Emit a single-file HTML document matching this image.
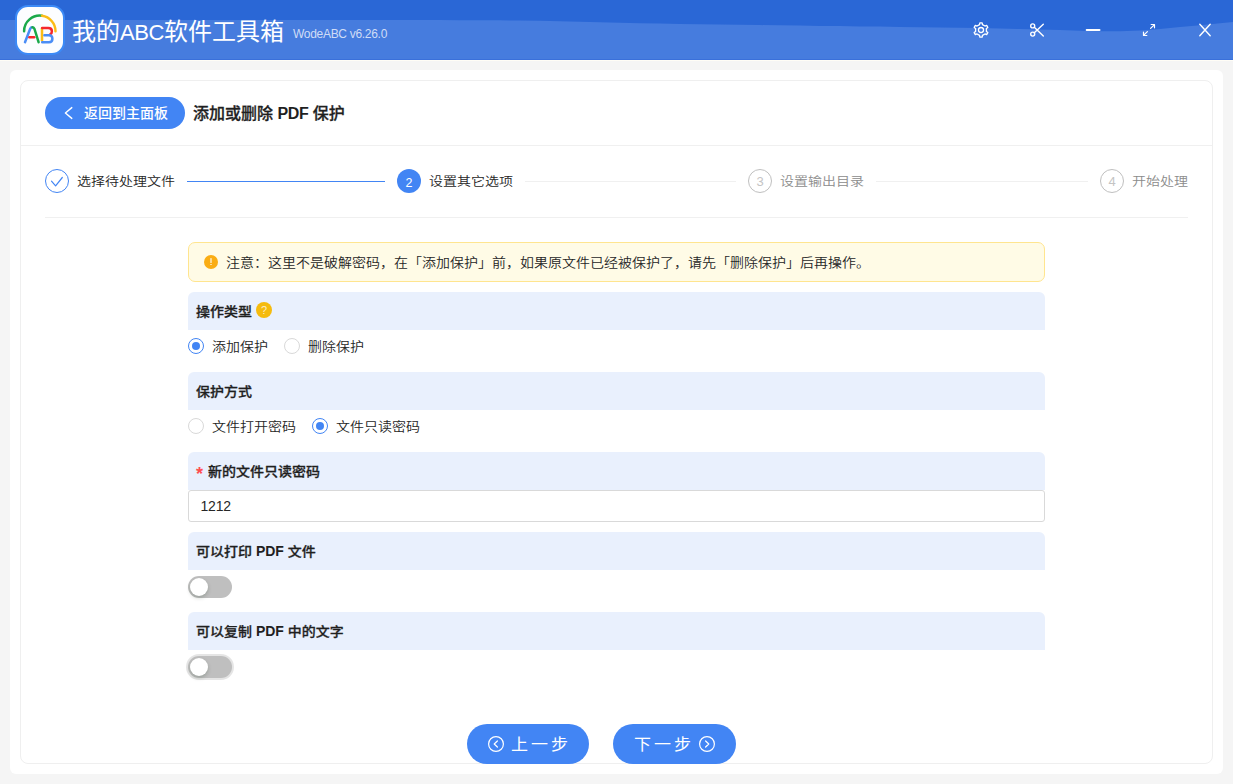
<!DOCTYPE html>
<html lang="zh-CN">
<head>
<meta charset="utf-8">
<title>我的ABC软件工具箱</title>
<style>
*{box-sizing:border-box;margin:0;padding:0}
html,body{width:1233px;height:784px;overflow:hidden;background:#f5f5f5}
body{position:relative;font-family:"Liberation Sans","Noto Sans CJK SC",sans-serif;font-size:14px;color:#262626;line-height:1}
.abs{position:absolute}
#hdr{position:absolute;left:0;top:0;width:1233px;height:61px;background:#467cde;overflow:hidden;border-bottom:1px solid #fffdf6;box-shadow:inset 0 -1px 0 #3a70da}
#hdr svg.wave{position:absolute;left:0;top:0}
#logo{position:absolute;left:15.4px;top:4.8px;width:49.4px;height:49.8px;border:2px solid #3c8af6;border-radius:13px;background:#fcfdff}
#title{position:absolute;left:72px;top:18px;font-size:24px;line-height:28px;color:#fff;white-space:nowrap;font-weight:400}
#title .lat{font-size:22px;letter-spacing:-.4px}
#ver{position:absolute;left:293px;top:27px;font-size:12px;line-height:14px;color:#cfdcf6;white-space:nowrap;letter-spacing:-.3px}
#outer{position:absolute;left:10px;top:70px;width:1213px;height:704px;background:#fff;border-radius:6px}
#card{position:absolute;left:20px;top:80px;width:1193px;height:684px;background:#fff;border:1px solid #efefef;border-radius:8px}
.hline{position:absolute;height:1px;background:#f0f0f0}
#back{position:absolute;left:45px;top:97px;width:140px;height:32px;border-radius:16px;background:#4285f4;color:#fff}
#back span{position:absolute;left:39px;top:8px;font-size:14px;line-height:16px;white-space:nowrap;font-weight:500}
#ptitle{position:absolute;left:193px;top:104px;font-size:16px;line-height:20px;font-weight:500;-webkit-text-stroke:.3px #1f1f1f;color:#1f1f1f;white-space:nowrap}
.stepc{position:absolute;top:169px;width:24px;height:24px;border-radius:12px;font-size:13px;line-height:24.5px;text-align:center;overflow:hidden}
.stept{position:absolute;top:173px;font-size:14px;font-weight:350;line-height:16px;white-space:nowrap;transform:translateY(-.2px) scaleY(.88);transform-origin:0 14.5px}
.lbl{position:absolute;left:188px;width:857px;height:38px;background:#e9f0fd;border-radius:6px 6px 0 0}
.lbl span{position:absolute;left:8px;top:11px;font-weight:500;-webkit-text-stroke:.3px #1f1f1f;font-size:14px;line-height:16px;white-space:nowrap;color:#1f1f1f;transform:translateY(-.2px) scaleY(.9);transform-origin:0 14.5px}
.lbl b{font-weight:700;-webkit-text-stroke:0;display:inline-block;transform:scaleY(1.13);transform-origin:0 12.5px}
.radio{position:absolute;width:16px;height:16px;border-radius:8px;border:1px solid #d9d9d9;background:#fff}
.radio.on{border-color:#4285f4}
.radio.on::after{content:"";position:absolute;left:3px;top:3px;width:8px;height:8px;border-radius:4px;background:#4285f4}
.rtxt{position:absolute;font-size:14px;font-weight:350;line-height:16px;white-space:nowrap;transform:translateY(.2px) scaleY(.9);transform-origin:0 14.5px}
.sw{position:absolute;left:188px;width:44px;height:22px;border-radius:11px;background:#bfbfbf}
.sw::after{content:"";position:absolute;left:2px;top:2px;width:18px;height:18px;border-radius:9px;background:#fff;box-shadow:0 2px 4px rgba(0,35,11,.2)}
.btn{position:absolute;top:724px;height:40px;border-radius:20px;background:#4285f4;color:#fff}
.btn span{position:absolute;top:12px;font-size:17px;line-height:18px;letter-spacing:3px;white-space:nowrap;transform:scaleY(.92);transform-origin:0 50%}
.lt{font-weight:700;-webkit-text-stroke:0}
</style>
</head>
<body>
<div id="hdr">
<svg class="wave" width="1233" height="60" viewBox="0 0 1233 60"><path d="M0,0 L0,20.0 L20,20.0 L40,20.0 L60,20.0 L80,20.0 L100,20.0 L120,20.0 L140,20.0 L160,20.0 L180,20.0 L200,20.0 L220,20.0 L240,20.0 L260,20.0 L280,20.0 L300,20.0 L320,20.0 L340,20.0 L360,20.0 L380,20.0 L400,20.1 L420,20.1 L440,20.1 L460,20.2 L480,20.2 L500,20.3 L520,20.5 L540,20.8 L560,21.2 L580,21.7 L600,22.2 L620,22.7 L640,23.2 L660,23.6 L680,24.0 L700,24.3 L720,24.6 L740,24.8 L760,25.1 L780,25.3 L800,25.6 L820,25.9 L840,26.1 L860,26.4 L880,26.6 L900,26.9 L920,27.2 L940,27.5 L960,27.8 L980,28.1 L1000,28.5 L1020,29.0 L1040,29.5 L1060,30.0 L1080,30.7 L1100,31.3 L1120,31.3 L1140,30.6 L1160,28.9 L1180,27.1 L1200,25.2 L1220,23.3 L1233,22.0 L1233,0 Z" fill="#2a67d6"/></svg>
<div id="logo"><svg width="45.4" height="45.8" viewBox="17.4 6.8 45.4 45.8" style="position:absolute;left:0;top:0" fill="none" stroke-linecap="round" stroke-linejoin="round" stroke-width="2.5">
<path d="M24.5,31 A15.7,15.6 0 0 1 42.4,15.56" stroke="#1aa94a"/>
<path d="M42.4,15.56 A15.7,15.6 0 0 1 55.9,31" stroke="#fbbc17"/>
<path d="M25.4,42 L30.6,28.6 Q31.3,27 32.8,27.1" stroke="#4a8df6"/>
<path d="M32.8,27.1 Q34.2,27 34.9,28.8 L39,42" stroke="#1aa94a"/>
<path d="M29.8,37 L34.6,37" stroke="#f5272d"/>
<path d="M42.4,28 L42.4,40.4" stroke="#fbbc17"/>
<path d="M42.6,27.8 L48.6,27.8 Q52.3,27.8 52.3,31 Q52.3,33.2 50.8,33.9" stroke="#f5272d"/>
<path d="M44.8,35 L49.4,35 Q52.8,35 52.8,38.5 Q52.8,42 49.4,42 L42.6,42" stroke="#4a8df6"/>
</svg></div>
<svg class="wave" width="1233" height="60" viewBox="0 0 1233 60" fill="none" stroke="#fff" stroke-width="1.3" stroke-linejoin="round" stroke-linecap="round">
<g transform="translate(981,30)"><path d="M-1.45,-5.41 L-1.14,-7.21 L1.14,-7.21 L1.45,-5.41 L3.96,-3.96 L5.67,-4.59 L6.82,-2.62 L5.41,-1.45 L5.41,1.45 L6.82,2.62 L5.67,4.59 L3.96,3.96 L1.45,5.41 L1.14,7.21 L-1.14,7.21 L-1.45,5.41 L-3.96,3.96 L-5.67,4.59 L-6.82,2.62 L-5.41,1.45 L-5.41,-1.45 L-6.82,-2.62 L-5.67,-4.59 L-3.96,-3.96Z"/><circle r="2.5" cx="0" cy="0"/></g>
<g transform="translate(1037,30)" stroke-width="1.4"><circle cx="-4.3" cy="-4.1" r="2"/><circle cx="-4.3" cy="4.1" r="2"/><path d="M-2.7,-2.8 L6.3,5.9 M-2.7,2.8 L6.3,-5.7"/></g>
<path d="M1086.7,30 L1099.5,30" stroke-width="2"/>
<g transform="translate(1149,30)" stroke-width="1.2"><path d="M1.6,-1.6 L5.2,-5.2 M2.2,-5.5 L5.5,-5.5 L5.5,-2.2 M-1.6,1.6 L-5.2,5.2 M-2.2,5.5 L-5.5,5.5 L-5.5,2.2"/></g>
<g transform="translate(1205,30)" stroke-width="1.4"><path d="M-5.2,-5.8 L5.2,5.8 M5.2,-5.8 L-5.2,5.8"/></g>
</svg>
<div id="title">我的<span class="lat">ABC</span>软件工具箱</div>
<div id="ver">WodeABC v6.26.0</div>
</div>
<div id="outer"></div>
<div id="card"></div>
<div class="hline" style="left:21px;top:145px;width:1191px"></div>
<div class="hline" style="left:45px;top:217px;width:1143px"></div>
<div id="back"><svg width="12" height="16" viewBox="0 0 12 16" style="position:absolute;left:18px;top:8px" fill="none" stroke="#fff" stroke-width="1.4" stroke-linecap="round" stroke-linejoin="round"><path d="M8.8,2.6 L2.4,8 L8.8,13.4"/></svg><span>返回到主面板</span></div>
<div id="ptitle">添加或删除 <b class="lt" style="letter-spacing:-.4px">PDF</b> 保护</div>

<!-- steps -->
<div class="stepc" style="left:45px;border:1px solid #4285f4"><svg width="24" height="24" viewBox="0 0 24 24" style="position:absolute;left:-1px;top:-1px" fill="none" stroke="#4285f4" stroke-width="1.2" stroke-linecap="round" stroke-linejoin="round"><path d="M6.5,12.2 L10.6,16.8 L17.3,8.5"/></svg></div>
<div class="stept" style="left:77px">选择待处理文件</div>
<div class="hline" style="left:187px;top:181px;width:198px;background:#4285f4"></div>
<div class="stepc" style="left:397px;background:#4285f4;color:#fff;line-height:28px;font-size:12.5px">2</div>
<div class="stept" style="left:429px">设置其它选项</div>
<div class="hline" style="left:525px;top:181px;width:211px"></div>
<div class="stepc" style="left:748px;border:1px solid #bfbfbf;color:#c4c4c4">3</div>
<div class="stept" style="left:780px;color:#8c8c8c">设置输出目录</div>
<div class="hline" style="left:876px;top:181px;width:212px"></div>
<div class="stepc" style="left:1100px;border:1px solid #bfbfbf;color:#c4c4c4">4</div>
<div class="stept" style="left:1132px;color:#8c8c8c">开始处理</div>

<!-- alert -->
<div class="abs" style="left:188px;top:242px;width:857px;height:40px;background:#fffbe6;border:1px solid #ffe58f;border-radius:7px"></div>
<div class="abs" style="left:204px;top:254.8px;width:14px;height:14px;border-radius:7px;background:#faad14"><i style="position:absolute;left:6px;top:3.3px;width:2.1px;height:4.6px;background:#fff;opacity:.55;border-radius:.5px"></i><i style="position:absolute;left:6px;top:9.1px;width:2.1px;height:1.3px;background:#fff;opacity:.6"></i></div>
<div class="rtxt" style="left:226px;top:254px">注意：这里不是破解密码，在「添加保护」前，如果原文件已经被保护了，请先「删除保护」后再操作。</div>

<div class="lbl" style="top:292px"><span>操作类型</span></div>
<div class="abs" style="left:256px;top:302px;width:16px;height:16px;border-radius:8px;background:#f5bb0e;color:rgba(255,255,255,.75);font-size:11px;line-height:17.4px;text-align:center">?</div>
<div class="radio on" style="left:188px;top:338px"></div><div class="rtxt" style="left:212px;top:338px">添加保护</div>
<div class="radio" style="left:284px;top:338px"></div><div class="rtxt" style="left:308px;top:338px">删除保护</div>

<div class="lbl" style="top:372px"><span>保护方式</span></div>
<div class="radio" style="left:188px;top:418px"></div><div class="rtxt" style="left:212px;top:418px">文件打开密码</div>
<div class="radio on" style="left:312px;top:418px"></div><div class="rtxt" style="left:336px;top:418px">文件只读密码</div>

<div class="lbl" style="top:452px"><i id="ast" style="position:absolute;left:8px;top:12.6px;color:#ff4d4f;font-style:normal;font-weight:700;font-size:18px;line-height:18px">*</i><span style="left:20px">新的文件只读密码</span></div>
<div class="abs" style="left:188px;top:490px;width:857px;height:32px;border:1px solid #d9d9d9;border-radius:3px;background:#fff;padding:7px 0 0 11.5px;letter-spacing:-.2px;font-size:14px;line-height:16px">1212</div>

<div class="lbl" style="top:532px"><span>可以打印 <b>PDF</b> 文件</span></div>
<div class="sw" style="top:576px"></div>
<div class="lbl" style="top:612px"><span>可以复制 <b>PDF</b> 中的文字</span></div>
<div class="sw" style="top:656px;box-shadow:0 0 0 2px rgba(0,0,0,.1)"></div>

<div class="btn" style="left:467px;width:122px"><svg width="18" height="18" viewBox="0 0 18 18" style="position:absolute;left:20px;top:11px" fill="none" stroke="#fff" stroke-width="1.2" stroke-linecap="round" stroke-linejoin="round"><circle cx="9" cy="9" r="7.4"/><path d="M10.4,6 L7.2,9 L10.4,12"/></svg><span style="left:44px">上一步</span></div>
<div class="btn" style="left:613px;width:123px"><span style="left:21px">下一步</span><svg width="18" height="18" viewBox="0 0 18 18" style="position:absolute;left:85px;top:11px" fill="none" stroke="#fff" stroke-width="1.2" stroke-linecap="round" stroke-linejoin="round"><circle cx="9" cy="9" r="7.4"/><path d="M7.6,6 L10.8,9 L7.6,12"/></svg></div>
</body>
</html>
